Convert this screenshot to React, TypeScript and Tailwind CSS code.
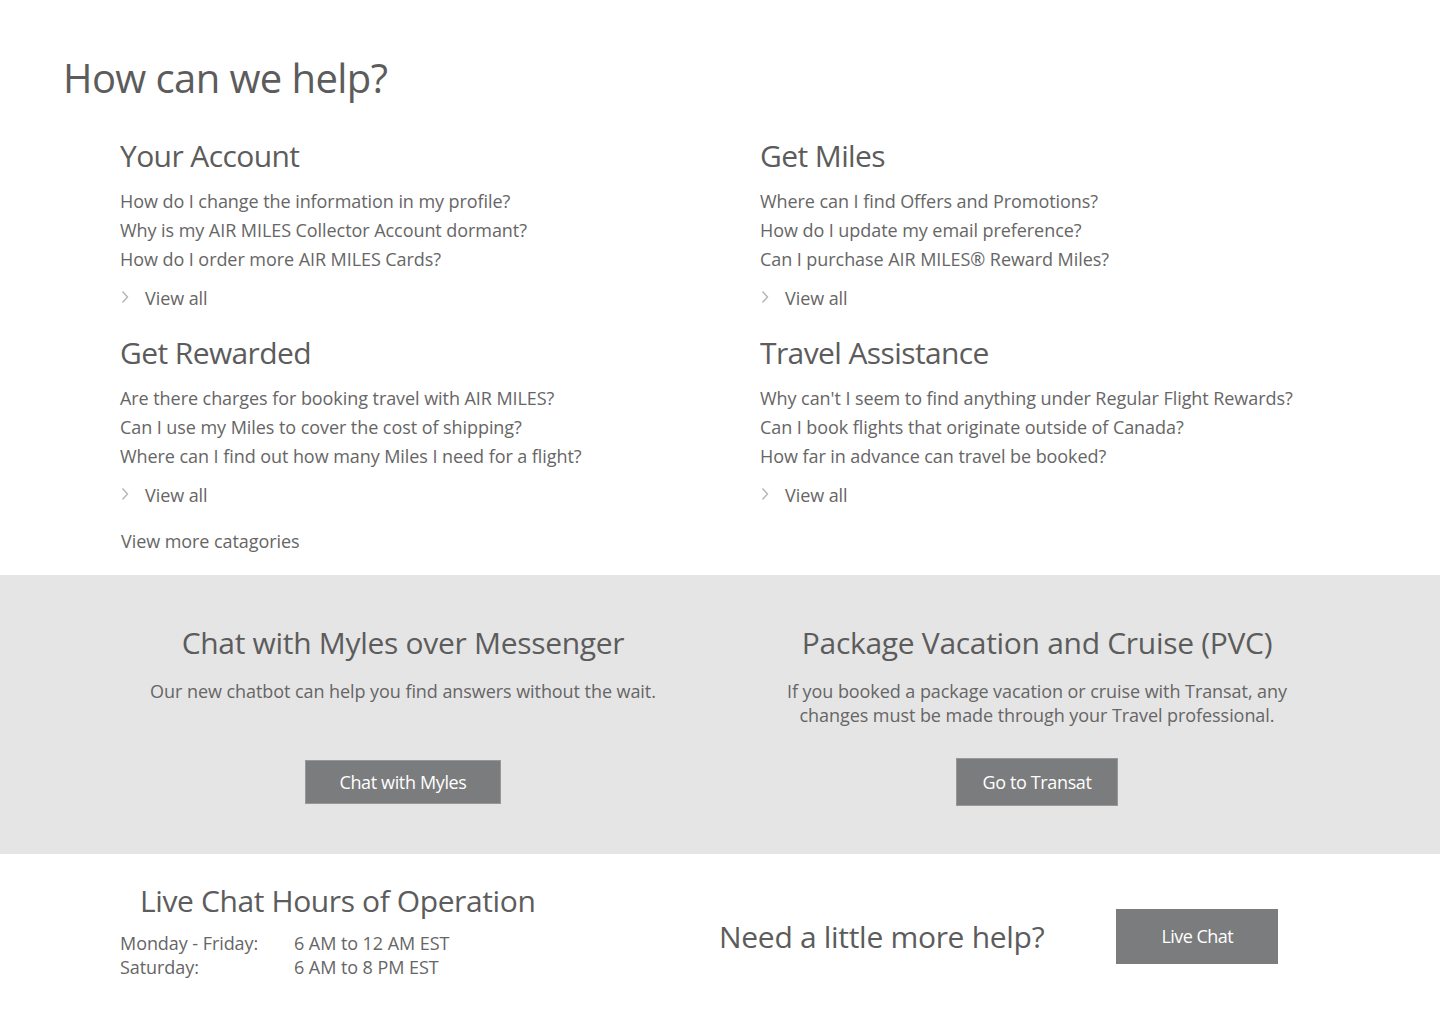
const categories = [
  {
    title: 'Your Account',
    questions: [
      'How do I change the information in my profile?',
      'Why is my AIR MILES Collector Account dormant?',
      'How do I order more AIR MILES Cards?',
    ],
  },
  {
    title: 'Get Miles',
    questions: [
      'Where can I find Offers and Promotions?',
      'How do I update my email preference?',
      'Can I purchase AIR MILES® Reward Miles?',
    ],
  },
  {
    title: 'Get Rewarded',
    questions: [
      'Are there charges for booking travel with AIR MILES?',
      'Can I use my Miles to cover the cost of shipping?',
      'Where can I find out how many Miles I need for a flight?',
    ],
  },
  {
    title: 'Travel Assistance',
    questions: [
      "Why can't I seem to find anything under Regular Flight Rewards?",
      'Can I book flights that originate outside of Canada?',
      'How far in advance can travel be booked?',
    ],
  },
];

const Chevron = () => (
  <svg width="8" height="14" viewBox="0 0 8 14" className="shrink-0">
    <path d="M1.5 1.5 L6.5 7 L1.5 12.5" fill="none" stroke="#b5b5b5" strokeWidth="1.4" />
  </svg>
);

const Category = ({ title, questions }: { title: string; questions: string[] }) => (
  <div className="flex flex-col">
    <h2 className="text-[30px] leading-[40px] tracking-[-0.02em] text-[#5c5c5c]">{title}</h2>
    <ul className="mt-[11px] flex flex-col">
      {questions.map((q) => (
        <li key={q} className="text-[18px] leading-[29px] text-[#666]">
          <a href="/">{q}</a>
        </li>
      ))}
    </ul>
    <a href="/" className="mt-[10px] flex items-center gap-[16px] pl-[1px] text-[18px] leading-[29px] text-[#666]">
      <span className="-mt-[4px]"><Chevron /></span>
      View all
    </a>
  </div>
);

export default function App() {
  return (
    <div className="min-h-[1024px] bg-white font-['Open_Sans',sans-serif] tracking-[-0.004em] text-[#5c5c5c]">
      <section className="px-[63px] pt-[51px]">
        <h1 className="text-[40px] leading-[54px] tracking-[-0.015em] text-[#5c5c5c]">How can we help?</h1>
        <div className="mt-[31px] grid grid-cols-2 gap-x-[40px] gap-y-[20px] pl-[57px] pr-[17px]">
          {categories.map((c) => (
            <Category key={c.title} {...c} />
          ))}
        </div>
        <a href="/" className="mt-[17px] ml-[58px] inline-block pb-[19px] text-[18px] leading-[29px] text-[#666]">
          View more catagories
        </a>
      </section>

      <section className="grid h-[279px] grid-cols-2 gap-x-[68px] bg-[#e5e5e5] px-[120px] pt-[48px]">
        <div className="flex flex-col items-center text-center">
          <h2 className="text-[30px] leading-[40px] tracking-[-0.01em]">Chat with Myles over Messenger</h2>
          <p className="mt-[16px] text-[18px] leading-[24px] text-[#666]">
            Our new chatbot can help you find answers without the wait.
          </p>
          <button className="mt-[57px] h-[44px] w-[196px] border border-[#979797] bg-[#7b7c7d] text-[18px] tracking-[-0.02em] text-white">
            Chat with Myles
          </button>
        </div>
        <div className="flex flex-col items-center text-center">
          <h2 className="text-[30px] leading-[40px] tracking-[-0.01em]">Package Vacation and Cruise (PVC)</h2>
          <p className="mt-[16px] w-[520px] text-[18px] leading-[24px] text-[#666]">
            If you booked a package vacation or cruise with Transat, any changes must be made through your Travel professional.
          </p>
          <button className="mt-[31px] h-[48px] w-[162px] border border-[#979797] bg-[#7b7c7d] text-[18px] tracking-[-0.02em] text-white">
            Go to Transat
          </button>
        </div>
      </section>

      <section className="flex items-start px-[120px] pt-[27px]">
        <div className="w-[599px]">
          <h2 className="pl-[20px] text-[30px] leading-[40px] tracking-[-0.013em]">Live Chat Hours of Operation</h2>
          <div className="mt-[10px] grid grid-cols-[174px_auto] text-[18px] leading-[24px] text-[#666]">
            <span>Monday - Friday:</span>
            <span>6 AM to 12 AM EST</span>
            <span>Saturday:</span>
            <span>6 AM to 8 PM EST</span>
          </div>
        </div>
        <div className="mt-[28px] flex items-center">
          <h2 className="text-[30px] leading-[40px] tracking-[-0.01em]">Need a little more help?</h2>
          <button className="ml-[72px] h-[55px] w-[162px] bg-[#7b7c7d] text-[18px] tracking-[-0.03em] text-white">
            Live Chat
          </button>
        </div>
      </section>
    </div>
  );
}
